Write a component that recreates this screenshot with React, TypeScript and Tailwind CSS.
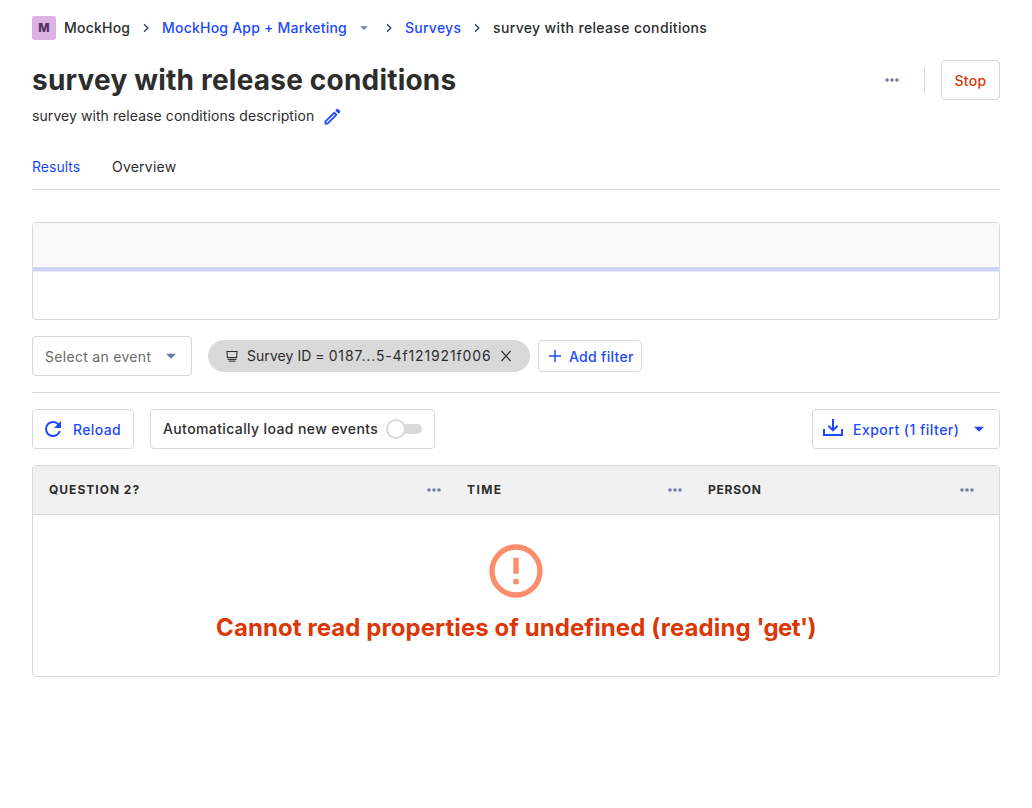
import React from 'react';

type IconProps = { className?: string };

const ChevronRight = ({ className = '' }: IconProps) => (
  <svg className={`h-4 w-4 shrink-0 text-[#35416b] ${className}`} viewBox="0 0 16 16" fill="none" stroke="currentColor" strokeWidth="1.4">
    <path d="M6.1 4.2 9.8 8l-3.7 3.8" />
  </svg>
);

const CaretDown = ({ className = '' }: IconProps) => (
  <svg className={`shrink-0 ${className}`} viewBox="0 0 24 24" fill="currentColor">
    <path d="m7 9.7 5 5 5-5Z" />
  </svg>
);

const Ellipsis = ({ className = '' }: IconProps) => (
  <svg className={`h-5 w-5 shrink-0 text-[#747ea1] ${className}`} viewBox="0 0 20 20" fill="currentColor">
    <circle cx="5" cy="10" r="1.8" />
    <circle cx="10" cy="10" r="1.8" />
    <circle cx="15" cy="10" r="1.8" />
  </svg>
);

const Pencil = () => (
  <svg className="h-[21px] w-[21px] shrink-0 text-[#1d4aff]" viewBox="0 0 24 24" fill="currentColor">
    <path d="m14.06 9.02.92.92L5.92 19H5v-.92l9.06-9.06M17.66 3c-.25 0-.51.1-.7.29l-1.83 1.83 3.75 3.75 1.83-1.83c.39-.39.39-1.02 0-1.41l-2.34-2.34c-.2-.2-.45-.29-.71-.29Zm-3.6 3.19L3 17.25V21h3.75L17.81 9.94l-3.75-3.75Z" />
  </svg>
);

const Refresh = () => (
  <svg className="h-6 w-6 shrink-0" viewBox="0 0 24 24" fill="currentColor">
    <path d="M17.65 6.35A7.96 7.96 0 0 0 12 4a8 8 0 1 0 7.73 10h-2.08A6 6 0 1 1 12 6c1.66 0 3.14.69 4.22 1.78L13 11h7V4l-2.35 2.35Z" />
  </svg>
);

const Download = () => (
  <svg className="h-6 w-6 shrink-0" viewBox="0 0 24 24" fill="none" stroke="currentColor" strokeWidth="2">
    <path d="M3 12v6h18v-6M12 2v11M7.4 8.8l4.6 4.6 4.6-4.6" />
  </svg>
);

const Monitor = () => (
  <svg className="h-[14px] w-[14px] shrink-0" viewBox="0 0 14 14" fill="none" stroke="currentColor">
    <path d="M2 2.5h10l-.4 6H2.4z" strokeWidth="1.1" />
    <path d="M2.5 10.4h9" strokeWidth="1.1" />
    <path d="M3.8 12.2h6.6" strokeWidth="1.4" opacity="0.75" />
  </svg>
);

const columns = [
  { title: 'QUESTION 2?', style: 'w-[418px] tracking-[1px]' },
  { title: 'TIME', style: 'w-[241px] tracking-[1.4px]' },
  { title: 'PERSON', style: 'w-[307px] tracking-[0.75px]' },
];

const Breadcrumbs = () => (
  <nav className="flex h-6 items-center font-medium">
    <span className="flex h-6 w-6 items-center justify-center rounded-[3px] bg-[#dcb1e3] text-xs font-extrabold tracking-normal text-[#572e5e]">M</span>
    <span className="ml-2 w-[66px] whitespace-nowrap tracking-[0.22px]">MockHog</span>
    <ChevronRight className="mx-2" />
    <a className="w-[185px] whitespace-nowrap tracking-[0.22px] text-[#1d4aff]">MockHog App + Marketing</a>
    <CaretDown className="ml-2 h-[18px] w-[18px] text-[#747ea1]" />
    <ChevronRight className="mx-2" />
    <a className="w-14 tracking-[0.25px] text-[#1d4aff]">Surveys</a>
    <ChevronRight className="mx-2" />
    <span className="tracking-[0.35px]">survey with release conditions</span>
  </nav>
);

const button = 'flex items-center rounded border border-[#d9d9d9] bg-white font-medium';

export default function App() {
  return (
    <main
      className="min-h-screen bg-white px-8 pt-4 text-sm leading-5 tracking-[0.3px] text-[#2d2d2d]"
      style={{ fontFamily: 'Inter, sans-serif' }}
    >
      <Breadcrumbs />

      <header className="mt-5 flex h-10 items-center">
        <h1 className="grow text-[28px] font-bold leading-10 tracking-[0.2px]">survey with release conditions</h1>
        <Ellipsis />
        <span className="ml-[22px] h-6 w-px bg-[#d9d9d9]" />
        <button className={`${button} ml-4 h-10 w-[59px] justify-center pt-0.5 text-[#db3707]`}>Stop</button>
      </header>
      <div className="mt-1.5 flex h-5 items-center">
        <span className="tracking-[0.075px]">survey with release conditions description</span>
        <span className="ml-2"><Pencil /></span>
      </div>

      <div className="mt-[19px] flex h-[45px] gap-8 border-b border-[#d9d9d9] pt-3">
        <span className="w-12 tracking-[0.02px] text-[#1d4aff]">Results</span>
        <span className="tracking-[0.22px]">Overview</span>
      </div>

      <section className="mt-8 flex h-[98px] flex-col overflow-hidden rounded border border-[#d9d9d9]">
        <div className="h-11 bg-[#f9f9f9]" />
        <div className="h-1 bg-[#ccd5f8]" />
        <div className="h-px bg-[#e8ebf7]" />
      </section>

      <div className="mt-4 flex h-10 items-center">
        <button className="flex h-10 w-40 items-center rounded border border-[#d9d9d9] pl-3 pt-0.5 text-[#6a6a6a]">
          Select an event
          <CaretDown className="-mt-0.5 ml-2 h-6 w-6 text-[#6b7aa5]" />
        </button>
        <span className="ml-4 flex h-8 w-[322px] items-center rounded-full bg-[#d9d9d9] pl-[17px]">
          <Monitor />
          <span className="ml-2 w-[245px] whitespace-pre tracking-[0.05px]">
            {'Survey ID = '}
            <span className="tracking-[0.86px]">0187...5-4f121921f006</span>
          </span>
          <svg className="ml-[7px] h-[14px] w-[14px]" viewBox="0 0 14 14" stroke="currentColor" strokeWidth="1.2">
            <path d="m2.5 2 9 10M11.5 2l-9 10" />
          </svg>
        </span>
        <button className={`${button} ml-2 h-8 w-[104px] pl-[9px] text-[#1d4aff]`}>
          <svg className="h-[14px] w-[14px]" viewBox="0 0 14 14" stroke="currentColor" strokeWidth="1.5">
            <path d="M7 1v12M1 7h12" />
          </svg>
          <span className="ml-[7px] pt-0.5">Add filter</span>
        </button>
      </div>

      <div className="mt-4 h-px bg-[#d9d9d9]" />

      <div className="mt-4 flex h-10 items-center">
        <button className={`${button} h-10 w-[102px] pl-2 text-[#1d4aff]`}>
          <Refresh />
          <span className="ml-2 pt-0.5 tracking-[0.38px]">Reload</span>
        </button>
        <label className={`${button} ml-4 h-10 w-[285px] pl-3 tracking-[0.385px]`}>
          Automatically load new events
          <span className="ml-[7.5px] flex h-5 w-9 items-center">
            <span className="h-5 w-5 shrink-0 rounded-full border-2 border-[#d9d9d9] bg-white" />
            <span className="-ml-0.5 h-[10px] grow rounded-r-full bg-[#d9d9d9]" />
          </span>
        </label>
        <button className={`${button} ml-auto h-10 w-[188px] pl-2 text-[#1d4aff]`}>
          <Download />
          <span className="ml-2 w-[106px] whitespace-nowrap pt-0.5 tracking-[0.48px]">Export (1 filter)</span>
          <CaretDown className="ml-2 h-6 w-6" />
        </button>
      </div>

      <section className="mt-4 h-[212px] overflow-hidden rounded border border-[#d9d9d9]">
        <div className="flex h-[49px] border-b border-[#d9d9d9] bg-[#f1f1f1]">
          {columns.map((column) => (
            <div key={column.title} className={`flex items-center justify-between pl-4 pr-[7px] text-xs font-bold last:pr-[22px] ${column.style}`}>
              {column.title}
              <Ellipsis />
            </div>
          ))}
        </div>
        <div className="flex flex-col items-center pt-6">
          <svg className="h-16 w-16 text-[#fb8d6b]" viewBox="0 0 24 24" fill="currentColor">
            <path d="M11 15h2v2h-2zm0-8h2v6h-2zm1-5a10 10 0 1 0 0 20 10 10 0 0 0 0-20Zm0 18a8 8 0 1 1 0-16 8 8 0 0 1 0 16Z" />
          </svg>
          <h2 className="mt-[9px] text-2xl font-bold leading-8 tracking-[0.08px] text-[#db3707]">
            Cannot read properties of undefined (reading <span className="tracking-[-0.6px]">'get')</span>
          </h2>
        </div>
      </section>
    </main>
  );
}
